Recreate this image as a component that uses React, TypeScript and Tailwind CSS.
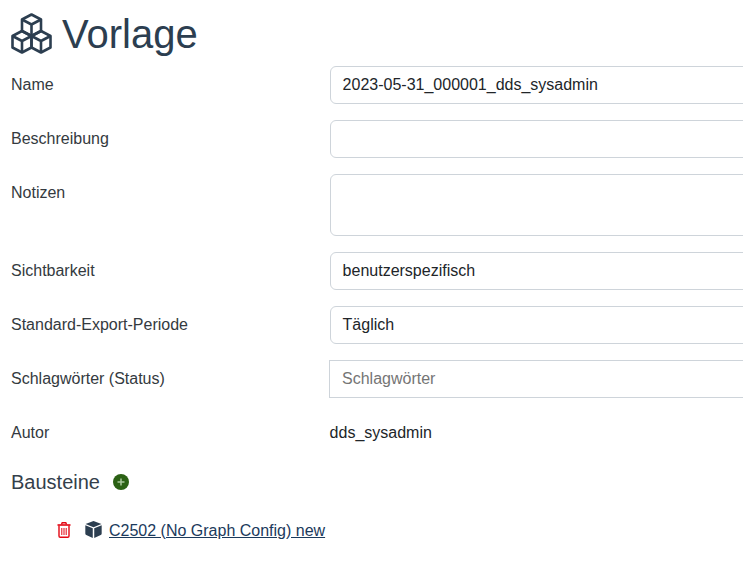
import React from 'react';

const CubesIcon = () => (
    <svg width="41" height="41" viewBox="0 0 41 41" fill="none" stroke="#2c3e50" strokeWidth="2.6" strokeLinejoin="round" className="shrink-0">
        {/* top cube */}
        <path d="M20.5 1.5 L30 6.5 V18 L20.5 23 L11 18 V6.5 Z" />
        <path d="M11 6.5 L20.5 11.5 L30 6.5 M20.5 11.5 V23" />
        {/* left cube */}
        <path d="M11 18 L20.5 23 V34.5 L11 39.5 L1.5 34.5 V23 Z" />
        <path d="M1.5 23 L11 28 L20.5 23 M11 28 V39.5" />
        {/* right cube */}
        <path d="M30 18 L39.5 23 V34.5 L30 39.5 L20.5 34.5 V23 Z" />
        <path d="M20.5 23 L30 28 L39.5 23 M30 28 V39.5" />
    </svg>
);

const PlusBadge = () => (
    <svg width="16" height="16" viewBox="0 0 16 16" className="shrink-0">
        <circle cx="8" cy="8" r="8" fill="#2b6114" />
        <path d="M8 4.5 V11.5 M4.5 8 H11.5" stroke="#a9c79c" strokeWidth="1.5" />
    </svg>
);

const TrashIcon = () => (
    <svg width="14" height="16" viewBox="0 0 14 16" fill="none" stroke="#e30613" className="shrink-0">
        <path d="M0.5 3 H13.5" strokeWidth="1.6" />
        <path d="M4.5 2.5 L5.2 0.8 H8.8 L9.5 2.5" strokeWidth="1.4" />
        <path d="M2 3.5 V14 Q2 15.2 3.2 15.2 H10.8 Q12 15.2 12 14 V3.5" strokeWidth="1.4" />
        <path d="M4.8 6 V13 M7 6 V13 M9.2 6 V13" strokeWidth="1" />
    </svg>
);

const CubeIcon = () => (
    <svg width="17" height="17" viewBox="0 0 16 16" className="shrink-0">
        <path d="M8 0 L15.5 2.8 L8 5.8 L0.5 2.8 Z" fill="#2c3e50" />
        <path d="M0.3 4 L7.3 6.9 V16 L1.2 13.2 Q0.3 12.8 0.3 11.8 Z" fill="#2c3e50" />
        <path d="M15.7 4 L8.7 6.9 V16 L14.8 13.2 Q15.7 12.8 15.7 11.8 Z" fill="#2c3e50" />
    </svg>
);

const fieldClass = 'w-[500px] shrink-0 h-[38px] px-3 flex items-center bg-white border border-[#ced4da] rounded-md text-[#212529]';

const Row: React.FC<{ label: string; children: React.ReactNode }> = ({ label, children }) => (
    <div className="flex mb-4">
        <div className="w-[318.6px] shrink-0 pt-[7px] leading-6 text-[#343a40]">{label}</div>
        {children}
    </div>
);

export default function App() {
    return (
        <div className="w-[743px] h-[561px] overflow-hidden bg-white pl-[11px] text-base font-['Liberation_Sans',Arial,sans-serif]">
            <div className="flex items-center gap-[10px] h-[66px] pt-[1px]">
                <CubesIcon />
                <h1 className="text-[40px] leading-[48px] text-[#2c3e50] pt-[1px]">Vorlage</h1>
            </div>

            <Row label="Name">
                <div className={fieldClass}>2023-05-31_000001_dds_sysadmin</div>
            </Row>
            <Row label="Beschreibung">
                <div className={fieldClass}></div>
            </Row>
            <Row label="Notizen">
                <div className="w-[500px] shrink-0 h-[62px] bg-white border border-[#ced4da] rounded-md"></div>
            </Row>
            <Row label="Sichtbarkeit">
                <div className={fieldClass}>benutzerspezifisch</div>
            </Row>
            <Row label="Standard-Export-Periode">
                <div className={fieldClass}>Täglich</div>
            </Row>
            <div className="flex mb-4">
                <div className="w-[318px] shrink-0 pt-[7px] leading-6 text-[#343a40]">Schlagwörter (Status)</div>
                <div className="w-[500px] shrink-0 h-[38px] px-3 flex items-center bg-white border border-[#ced4da] text-[#757575]">Schlagwörter</div>
            </div>
            <Row label="Autor">
                <div className="pt-[7px] leading-6 text-[#212529]">dds_sysadmin</div>
            </Row>

            <div className="flex items-center gap-[13px] h-[28px] mt-[23px]">
                <span className="text-xl leading-6 text-[#343f4b]">Bausteine</span>
                <PlusBadge />
            </div>

            <div className="flex items-center h-6 mt-[23px] pl-[46px]">
                <span className="-mt-[2px]"><TrashIcon /></span>
                <span className="ml-[14px] -mt-[3px]"><CubeIcon /></span>
                <a href="#" className="ml-[7px] text-[#1b3a5c] underline">C2502 (No Graph Config) new</a>
            </div>
        </div>
    );
}
